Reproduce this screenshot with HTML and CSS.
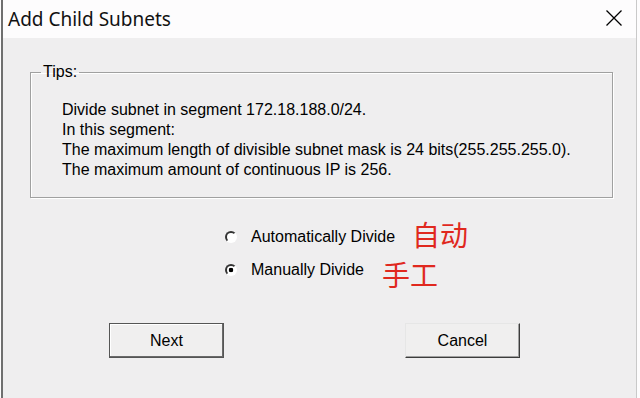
FILE: index.html
```html
<!DOCTYPE html>
<html lang="en">
<head>
    <meta charset="UTF-8">
    <title>Add Child Subnets</title>
    <link rel="stylesheet" href="styles.css">
</head>
<body>
    <div class="window">
        <div class="titlebar">
            <span class="title">Add Child Subnets</span>
            <svg class="close" width="16" height="16" viewBox="0 0 16 16">
                <path d="M0.5 0.5 L15.5 15.5 M15.5 0.5 L0.5 15.5" stroke="#000" stroke-width="1.3" fill="none"/>
            </svg>
        </div>
        <div class="content">
            <fieldset class="tips">
                <legend>Tips:</legend>
                <p>Divide subnet in segment 172.18.188.0/24.</p>
                <p>In this segment:</p>
                <p>The maximum length of divisible subnet mask is 24 bits(255.255.255.0).</p>
                <p>The maximum amount of continuous IP is 256.</p>
            </fieldset>

            <div class="options">
                <label class="option">
                    <input type="radio" name="mode" class="radio">
                    <span>Automatically Divide</span>
                    <span class="note note-up">自动</span>
                </label>
                <label class="option">
                    <input type="radio" name="mode" class="radio" checked>
                    <span>Manually Divide</span>
                    <span class="note note-down">手工</span>
                </label>
            </div>

            <div class="buttons">
                <button class="btn btn-default">Next</button>
                <button class="btn">Cancel</button>
            </div>
        </div>
    </div>
</body>
</html>
```

FILE: styles.css
```css
body {
    margin: 0;
    padding: 0;
    background: #fdfcfd;
    font-family: "Liberation Sans", Arial, sans-serif;
    color: #000;
}
.window {
    width: 633px;
    height: 398px;
    margin-left: 1px;
    border-left: 2px solid #6f6f6f;
    border-right: 1px solid #c9c9c9;
    display: flex;
    flex-direction: column;
    background: #efeeef;
}
.titlebar {
    height: 38px;
    background: #fdfcfd;
    display: flex;
    align-items: center;
    justify-content: space-between;
    padding: 0 14px 0 5px;
    flex-shrink: 0;
}
.title {
    font-family: "Noto Sans", "Open Sans", sans-serif;
    font-size: 19px;
    color: #111;
    margin-top: -1px;
}
.close {
    display: block;
    margin-top: -2px;
}
.content {
    flex: 1;
    display: flex;
    flex-direction: column;
}
.tips {
    box-sizing: border-box;
    width: 583px;
    margin: 25px 0 0 27px;
    padding: 19px 10px 17px 31px;
    border: 1px solid #a0a0a0;
    box-shadow: inset 1px 1px 0 #fff, 1px 1px 0 #fff;
    font-size: 16px;
}
.tips legend {
    margin-left: -21px;
    padding: 0 2px;
    line-height: 18px;
    font-size: 16px;
}
.tips p {
    margin: 0;
    line-height: 20px;
}
.options {
    margin: 22px 0 0 222px;
    display: flex;
    flex-direction: column;
}
.option {
    height: 33px;
    display: flex;
    align-items: center;
    font-size: 16px;
}
.radio {
    appearance: none;
    -webkit-appearance: none;
    width: 12px;
    height: 12px;
    margin: 0 14px 0 0;
    border-radius: 50%;
    border: 2px solid;
    border-color: #333 #fff #fff #333;
    background: #fff;
    box-sizing: border-box;
}
.radio:checked {
    background: radial-gradient(circle, #000 2px, #fff 2.6px);
}
.note {
    font-family: "Noto Sans CJK SC", sans-serif;
    font-size: 28px;
    line-height: 1;
    color: #e0281e;
}
.note-up {
    margin-left: 17px;
    margin-bottom: 6px;
}
.note-down {
    margin-left: 18px;
    margin-top: 8px;
}
.buttons {
    margin: 37px 0 0 106px;
    display: flex;
    gap: 181px;
}
.btn {
    width: 115px;
    height: 35px;
    font-family: "Liberation Sans", Arial, sans-serif;
    font-size: 16px;
    color: #000;
    background: #f0efef;
    border: 1px solid;
    border-color: #e6e6e6 #3c3c3c #3c3c3c #e6e6e6;
    box-shadow: inset -1px -1px 0 #a0a0a0;
    padding: 0;
}
.btn-default {
    border-color: #555;
    box-shadow: inset -1px -1px 0 #6a6a6a, inset 1px 1px 0 #fff;
}
```
